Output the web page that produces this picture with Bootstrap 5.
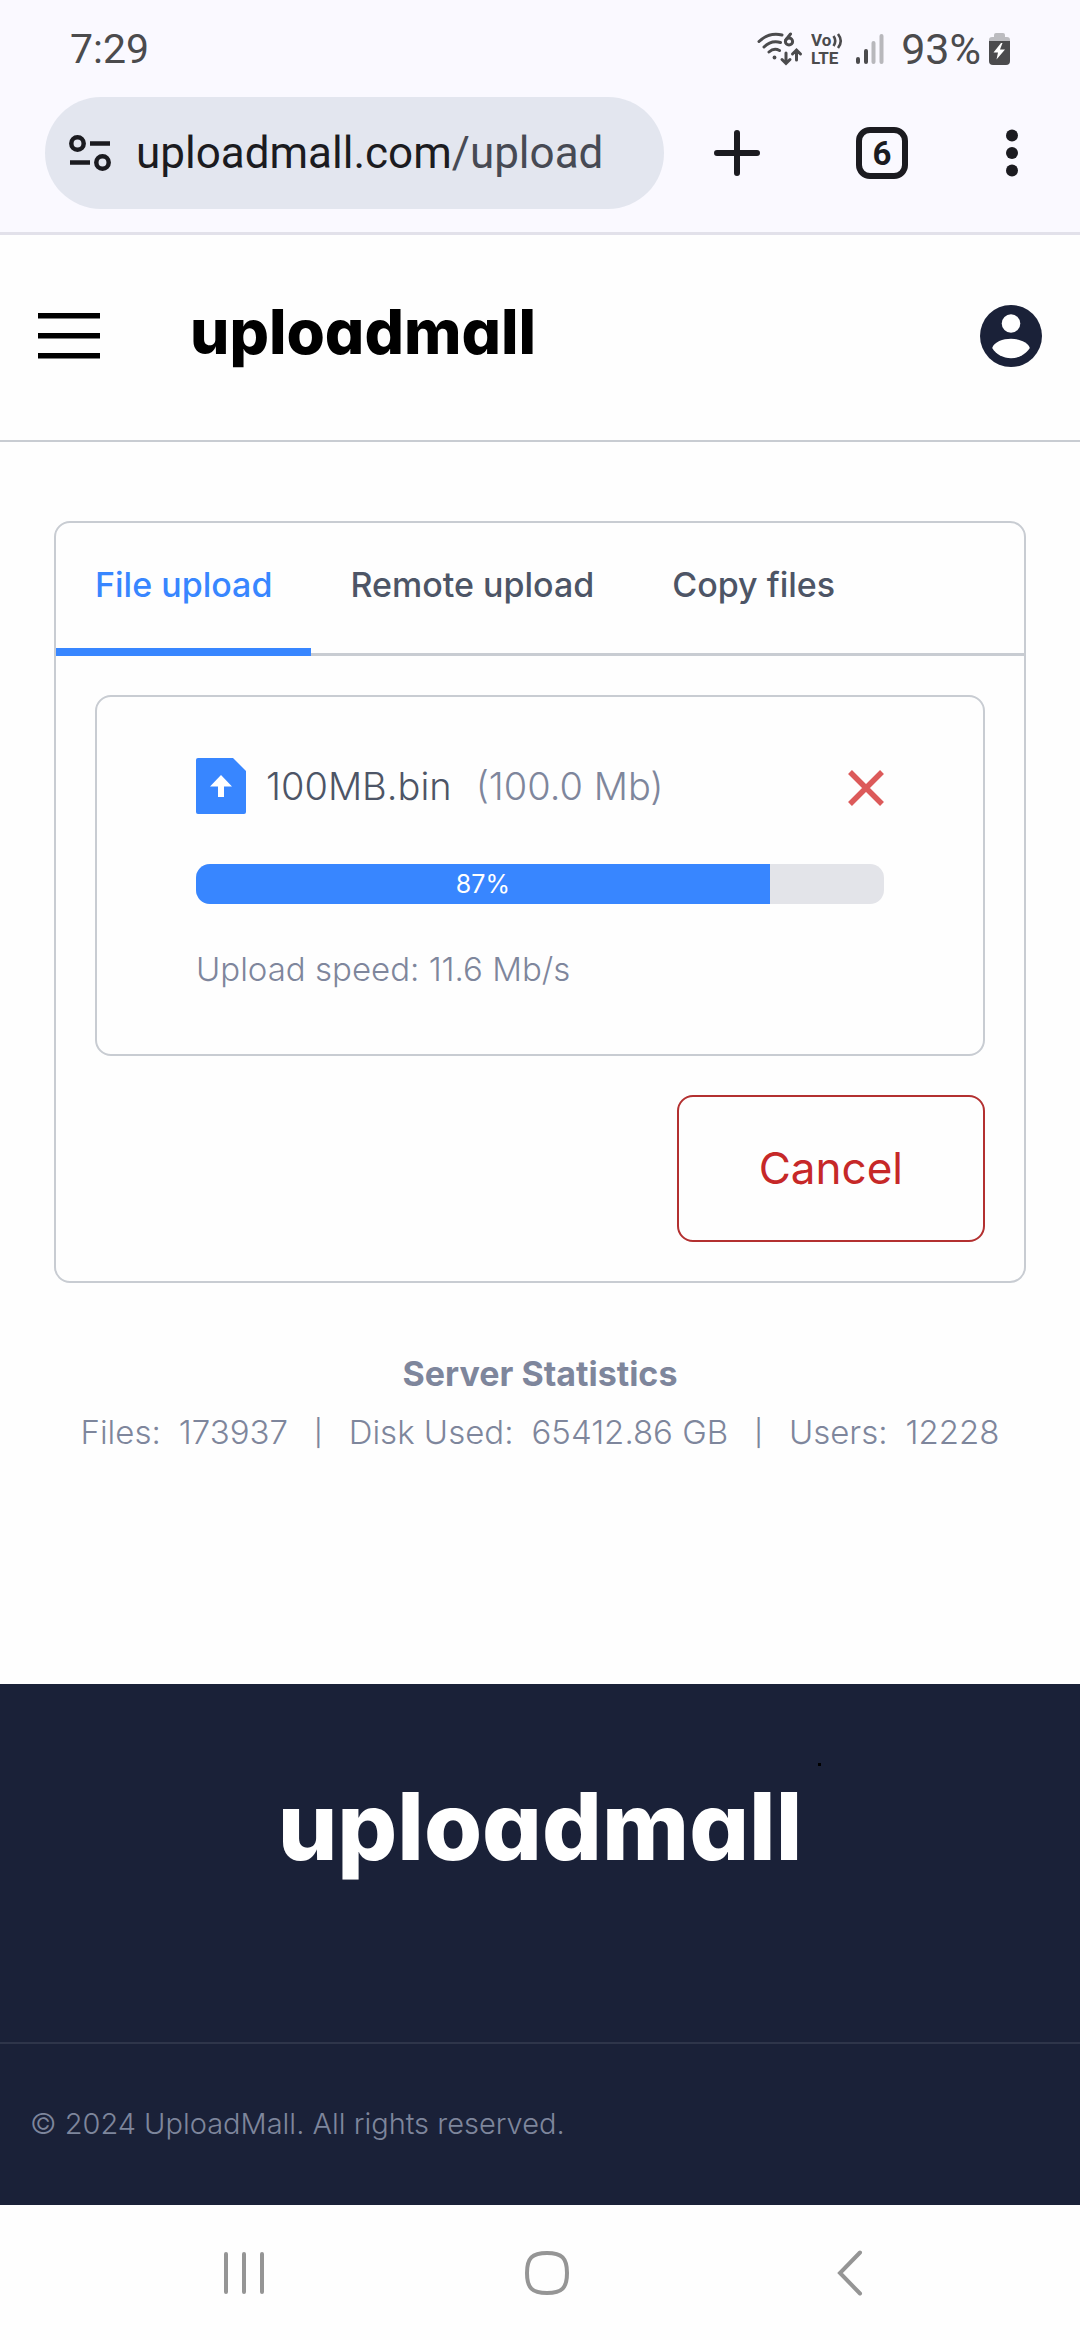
<!DOCTYPE html>
<html lang="en">
<head>
<meta charset="utf-8">
<meta name="viewport" content="width=device-width, initial-scale=1">
<title>UploadMall - Upload files</title>
<link rel="stylesheet" href="https://cdn.jsdelivr.net/npm/bootstrap@5.3.0/dist/css/bootstrap.min.css">
<script src="https://cdn.jsdelivr.net/npm/bootstrap@5.3.0/dist/js/bootstrap.bundle.min.js" defer></script>
<style>
  :root { --navy: #1a2138; --blue: #3886ff; --line: #c8ccd2; --ink: #4d5566; --soft: #7e869c; }
  body { font-family: Inter, "Open Sans", sans-serif; color: var(--ink); font-size: 33px; line-height: 44px; background: #fefefe; }
  svg { display: block; flex: none; }
  a { text-decoration: none; }
  button.plain { background: none; border: 0; padding: 0; }

  .browser { background: #faf9ff; border-bottom: 3px solid #e2e1ea; font-family: Roboto, sans-serif; }
  .status { height: 97px; padding: 0 70px; font-size: 41px; color: #4b4b4d; }
  .status .charge { font-size: 43px; }
  .toolbar { padding: 0 60px 23px 45px; color: #1b1b20; }
  .address { height: 112px; border-radius: 56px; background: #e3e6ef; padding-left: 24px; gap: 25px; }
  .address a { font-size: 44px; color: #1b1b20; }
  .address .path { color: #474a54; }
  .tool-group { margin-left: 50px; gap: 96px; }

  .site-head { padding: 64px 38px 67px; border-bottom: 2px solid var(--line); gap: 90px; }
  .wordmark { font-family: Inter, "Open Sans", sans-serif; font-weight: 800; font-feature-settings: "cv11"; color: #000; font-size: 62px; line-height: 66px; }
  .wordmark.big { font-size: 94px; line-height: 96px; color: #fff; }

  .upload { margin: 79px 54px 0; border: 2px solid var(--line); border-radius: 16px; background: transparent; color: inherit; }
  .upload .nav { border-bottom: 3px solid var(--line); }
  .upload .nav-link { font-size: 34px; font-weight: 500; color: var(--ink); padding: 40px 39px 41px; border: 0; border-bottom: 8px solid transparent; border-radius: 0; margin-bottom: -3px; }
  .upload .nav-link.active { color: var(--blue); background: none; border-bottom-color: var(--blue); }
  .upload .panel { padding: 39px; }
  .queue { border: 2px solid var(--line); border-radius: 16px; padding: 61px 99px 63px; }
  .fname { font-size: 38px; font-weight: 300; }
  .soft { color: var(--soft); font-weight: 300; }
  .progress { height: 40px; border-radius: 14px; margin: 50px 0 43px; font-size: 25px; background: #e3e4e9; }
  .progress-bar { background: var(--blue); }
  .btn-stop { margin-top: 39px; padding: 41px 80px; font-size: 44px; line-height: 61px; color: #c62828; border: 2px solid #b33030; border-radius: 16px; }

  .stats { margin-top: 61px; padding-bottom: 222px; line-height: 59px; color: var(--soft); }
  .stats h2 { font-size: 34px; font-weight: 700; line-height: 59px; margin: 0; }
  .stats .figures { gap: 18px; }
  .stats .bar { font-size: 26px; font-weight: 400; }

  footer { background: var(--navy); }
  .foot-logo { padding: 94px 0 168px; }
  .speck { position: absolute; top: 79px; left: calc(50% + 278px); width: 3px; height: 3px; background: #000; }
  .legal { border-top: 2px solid #2e354a; padding: 58px 30px 59px; font-size: 29px; }
  .sysnav { background: #fefefe; height: 135px; padding: 0 79px 0 93px; }
</style>
</head>
<body>

<div class="browser">
  <div class="status d-flex align-items-center justify-content-between">
    <span>7:29</span>
    <div class="d-flex align-items-center">
      <svg width="46" height="34" viewBox="0 0 46 34" fill="none" stroke="#4b4b4d" stroke-width="3" stroke-linecap="round" role="img" aria-label="Wi-Fi 6">
        <path d="M2 9.500Q12 0 25 3M7 15Q14 8 23.500 10.500M12 20Q17 15.500 22.500 18.500"/>
        <circle cx="17.500" cy="25.500" r="1.900" fill="#4b4b4d" stroke="none"/>
        <circle cx="32" cy="9.500" r="3.600"/><path d="M33.500 2L28.800 8"/>
        <path d="M29 21V31M25 27.500L29 31.500L33 27.500M39.500 28V19M35.500 22L39.500 18L43.500 22"/>
      </svg>
      <svg class="ms-2" width="34" height="46" viewBox="0 -6 34 46" fill="#4b4b4d" font-family="Roboto" font-weight="700" role="img" aria-label="VoLTE">
        <text x="0" y="14" font-size="17">Vo</text>
        <text x="0" y="32" font-size="17">LTE</text>
        <path d="M22.500 4Q26 9 22.500 14M27 2Q32.500 9 27 16" fill="none" stroke="#4b4b4d" stroke-width="2.600"/>
      </svg>
      <svg class="ms-2" width="32" height="32" viewBox="0 0 32 32" stroke-width="4" stroke-linecap="round" stroke="#4b4b4d" aria-hidden="true">
        <path d="M5 26V29M13 18V29"/><path d="M20.500 10V29M28.500 3V29" stroke="#b8b8bc"/>
      </svg>
      <span class="charge ms-3">93%</span>
      <svg class="ms-2" width="21" height="32" viewBox="0 0 21 32" role="img" aria-label="Charging">
        <path d="M5 2Q5 0 7 0H14Q16 0 16 2V4H18Q21 4 21 7V10H0V7Q0 4 3 4H5Z" fill="#bcbcc0"/>
        <path d="M0 8H21V28Q21 32 17 32H4Q0 32 0 28Z" fill="#4b4b4d"/>
        <path d="M12 10L4.500 19.500H9L7.500 26.500L16 16.500H11L13.500 10Z" fill="#fff"/>
      </svg>
    </div>
  </div>
  <div class="toolbar d-flex align-items-center">
    <div class="address d-flex align-items-center flex-grow-1">
      <button class="plain" type="button" aria-label="Site information">
        <svg width="42" height="36" viewBox="0 0 42 36" fill="none" stroke="#1b1b20" stroke-width="4.500">
          <circle cx="8.500" cy="8.500" r="6.200"/><path d="M21 8.500H41M1 27.500H21"/><circle cx="33.500" cy="27.500" r="6.200"/>
        </svg>
      </button>
      <a href="#">uploadmall.com<span class="path">/upload</span></a>
    </div>
    <div class="tool-group d-flex align-items-center">
      <button class="plain" type="button" aria-label="New tab">
        <svg width="46" height="46" viewBox="0 0 46 46" stroke="#1b1b20" stroke-width="6" stroke-linecap="round"><path d="M23 3V43M3 23H43"/></svg>
      </button>
      <button class="plain" type="button" aria-label="6 open tabs">
        <svg width="52" height="52" viewBox="0 0 52 52"><rect x="3" y="3" width="46" height="46" rx="11" fill="none" stroke="#1b1b20" stroke-width="6"/><text x="26" y="37.500" text-anchor="middle" font-family="Roboto" font-weight="700" font-size="33" fill="#1b1b20">6</text></svg>
      </button>
      <button class="plain" type="button" aria-label="More">
        <svg width="16" height="48" viewBox="0 0 16 48" fill="#1b1b20"><circle cx="8" cy="6.500" r="6"/><circle cx="8" cy="24" r="6"/><circle cx="8" cy="41.500" r="6"/></svg>
      </button>
    </div>
  </div>
</div>

<header class="site-head d-flex align-items-center">
  <button class="plain" type="button" aria-label="Menu">
    <svg width="62" height="46" viewBox="0 0 62 46"><path d="M0 0H62V5.500H0ZM0 20H62V25.500H0ZM0 40H62V45.500H0Z"/></svg>
  </button>
  <a class="wordmark mb-2" href="#">uploadmall</a>
  <a class="ms-auto" href="#" aria-label="Account">
    <svg width="62" height="62" viewBox="0 0 62 62"><circle cx="31" cy="31" r="31" fill="#1a2138"/><circle cx="31" cy="18.500" r="9.300" fill="#fff"/><path d="M12.200 43C14 37 23 33.800 31 33.800S48 37 49.800 43C46 49 39 53.300 31 53.300S16 49 12.200 43Z" fill="#fff"/></svg>
  </a>
</header>

<main>
  <section class="card upload">
    <nav class="nav flex-nowrap">
      <a class="nav-link active" aria-current="page" href="#">File upload</a>
      <a class="nav-link" href="#">Remote upload</a>
      <a class="nav-link" href="#">Copy files</a>
    </nav>
    <div class="panel">
      <div class="queue">
        <div class="d-flex align-items-center">
          <svg width="50" height="56" viewBox="0 0 50 56"><path d="M2 0H37L50 13V54Q50 56 48 56H2Q0 56 0 54V2Q0 0 2 0Z" fill="#3886ff"/><path d="M25 17L36 28.500H28V39H22V28.500H14Z" fill="#fff"/></svg>
          <span class="fname ms-3 ps-1">100MB.bin</span>
          <span class="fname soft ms-4">(100.0 Mb)</span>
          <button class="plain ms-auto mt-1" type="button" aria-label="Remove file">
            <svg width="36" height="36" viewBox="0 0 36 36" stroke="#dc5a5a" stroke-width="5.500"><path d="M2 2L34 34M34 2L2 34"/></svg>
          </button>
        </div>
        <div class="progress" role="progressbar" aria-label="Upload progress" aria-valuenow="87" aria-valuemin="0" aria-valuemax="100">
          <div class="progress-bar" style="width: 83.4%">87%</div>
        </div>
        <div class="soft">Upload speed: 11.6 Mb/s</div>
      </div>
      <div class="d-flex justify-content-end">
        <button class="btn btn-stop" type="button">Cancel</button>
      </div>
    </div>
  </section>

  <section class="stats text-center">
    <h2>Server Statistics</h2>
    <div class="figures soft d-flex justify-content-center text-nowrap">
      <span>Files:</span><span>173937</span><span class="bar px-2">|</span>
      <span>Disk Used:</span><span>65412.86 GB</span><span class="bar px-2">|</span>
      <span>Users:</span><span>12228</span>
    </div>
  </section>
</main>

<footer>
  <div class="foot-logo position-relative text-center">
    <div class="wordmark big">uploadmall</div>
    <span class="speck"></span>
  </div>
  <div class="legal soft">© 2024 UploadMall. All rights reserved.</div>
</footer>

<nav class="sysnav d-flex align-items-center" aria-label="System">
  <button class="plain col d-flex justify-content-center" type="button" aria-label="Recent apps">
    <svg width="42" height="44" viewBox="0 0 42 44" stroke="#959595" stroke-width="4" stroke-linecap="round"><path d="M3 3V41M21 3V41M39 3V41"/></svg>
  </button>
  <button class="plain col d-flex justify-content-center" type="button" aria-label="Home">
    <svg width="44" height="44" viewBox="0 0 44 44" fill="none" stroke="#959595" stroke-width="4"><path d="M22 2C37 2 42 7 42 22S37 42 22 42S2 37 2 22S7 2 22 2Z"/></svg>
  </button>
  <button class="plain col d-flex justify-content-center" type="button" aria-label="Back">
    <svg width="26" height="46" viewBox="0 0 26 46" fill="none" stroke="#959595" stroke-width="4" stroke-linecap="round"><path d="M23 2.500L3 23L23 43.500"/></svg>
  </button>
</nav>
</body>
</html>
